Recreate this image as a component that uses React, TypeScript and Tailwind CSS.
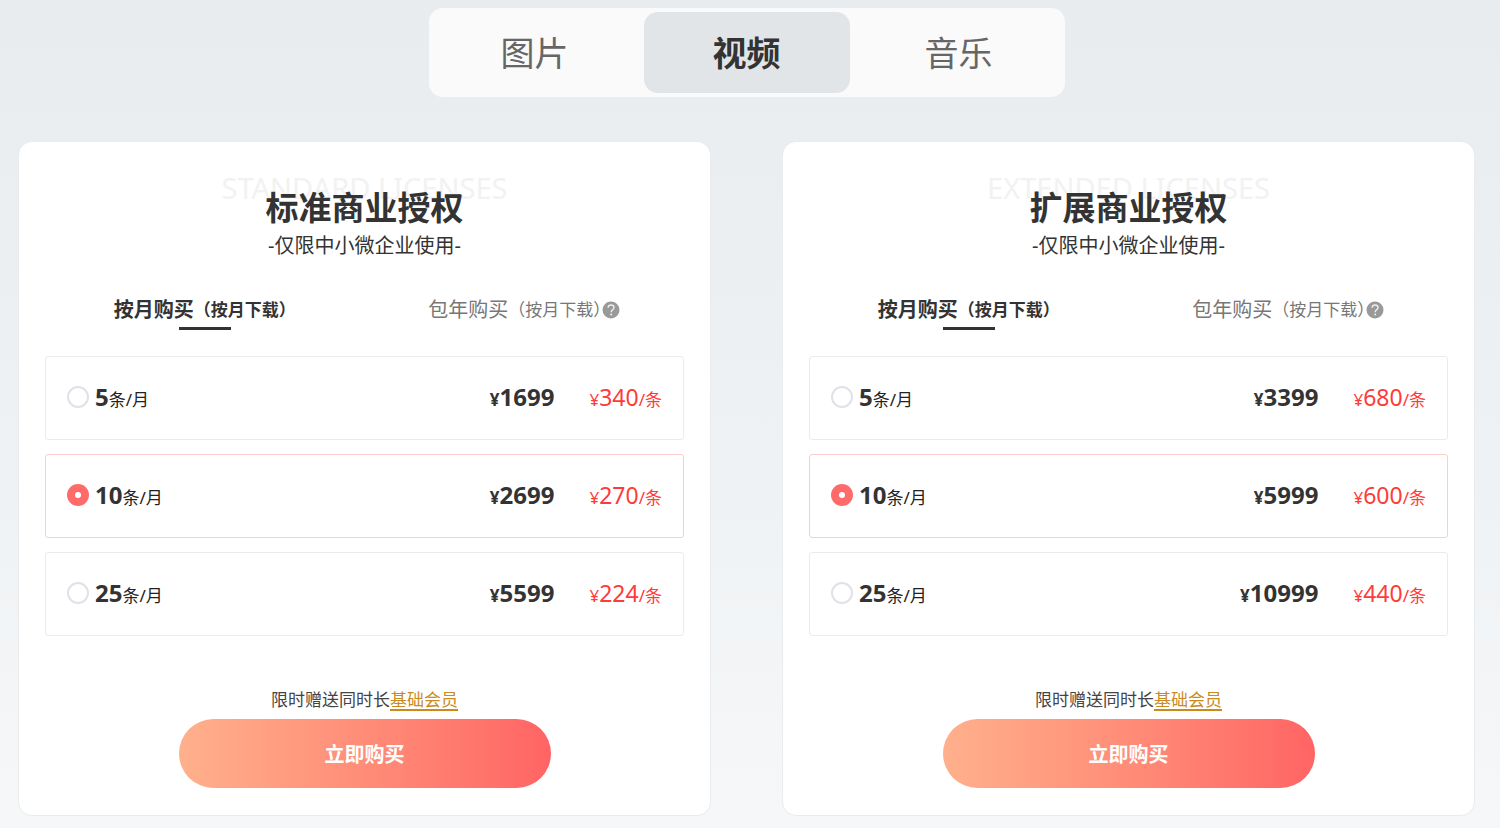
import { useState } from "react";

type Plan = { count: number; price: number; unit: number };

const licenses: { id: string; title: string; watermark: string; plans: Plan[] }[] = [
  {
    id: "standard",
    title: "标准商业授权",
    watermark: "STANDARD LICENSES",
    plans: [
      { count: 5, price: 1699, unit: 340 },
      { count: 10, price: 2699, unit: 270 },
      { count: 25, price: 5599, unit: 224 },
    ],
  },
  {
    id: "extended",
    title: "扩展商业授权",
    watermark: "EXTENDED LICENSES",
    plans: [
      { count: 5, price: 3399, unit: 680 },
      { count: 10, price: 5999, unit: 600 },
      { count: 25, price: 10999, unit: 440 },
    ],
  },
];

const mediaTabs = ["图片", "视频", "音乐"];

const HelpIcon = () => (
  <svg viewBox="0 0 18 18" className="w-[18px] h-[18px] shrink-0 -ml-2" aria-hidden="true">
    <circle cx="9" cy="9" r="8.5" fill="#999" />
    <path
      d="M6.1 6.7C6.2 4.9 7.4 4 9.1 4c1.7 0 2.9.9 2.9 2.4 0 1.1-.6 1.8-1.5 2.5-.9.6-1.3 1.1-1.3 2.3"
      fill="none"
      stroke="#eee"
      strokeWidth="1.4"
    />
    <circle cx="9.2" cy="13.6" r="1" fill="#eee" />
  </svg>
);

const LicenseCard = ({ id, title, watermark, plans }: (typeof licenses)[number]) => {
  const [billing, setBilling] = useState("month");
  const [selected, setSelected] = useState(10);
  const billings = [
    { key: "month", label: "按月购买" },
    { key: "year", label: "包年购买" },
  ];

  return (
    <section className="flex flex-col rounded-[14px] border border-[#e9ebec] bg-white px-[26px] pt-[46px] pb-[27px]">
      <div className="relative text-center">
        <div className="absolute inset-x-0 -top-5 text-[29px] leading-10 text-[#f2f2f2] whitespace-nowrap" aria-hidden="true">
          {watermark}
        </div>
        <h2 className="relative text-[33px] leading-10 font-bold text-[#333]">{title}</h2>
        <p className="relative mt-0.5 text-[20px] leading-8 text-[#333]">-仅限中小微企业使用-</p>
      </div>

      <div className="mt-8 grid grid-cols-2">
        {billings.map(({ key, label }) => (
          <button
            key={key}
            onClick={() => setBilling(key)}
            className={`flex flex-col items-center gap-px leading-8 ${
              billing === key ? "font-bold text-[#333]" : "text-[#777]"
            }`}
          >
            <span className="flex items-center whitespace-nowrap">
              <span className="text-[20px]">{label}</span>
              <span className="text-[17px]">（按月下载）</span>
              {key === "year" && <HelpIcon />}
            </span>
            <span className={`h-[3px] w-[52px] ${billing === key ? "bg-[#333]" : ""}`} />
          </button>
        ))}
      </div>

      <div className="mt-[26px] flex flex-col gap-[14px]">
        {plans.map((plan) => (
          <label
            key={plan.count}
            className={`flex h-[84px] items-center rounded-[3px] border px-[21px] pb-0.5 whitespace-nowrap cursor-pointer ${
              selected === plan.count ? "border-[#ffcccc]" : "border-[#e9ebf0]"
            }`}
          >
            <input
              type="radio"
              name={`plan-${id}`}
              checked={selected === plan.count}
              onChange={() => setSelected(plan.count)}
              className="w-[22px] h-[22px] shrink-0 appearance-none rounded-full border-2 border-[#dfe2e8] bg-white checked:border-8 checked:border-[#ff6a6a]"
            />
            <span className="ml-1.5 text-[17px] text-[#222]">
              <b className="text-[24px] text-[#333]">{plan.count}</b>条/月
            </span>
            <span className="ml-auto text-[17px] font-bold text-[#333]">
              ¥<span className="text-[24px]">{plan.price}</span>
            </span>
            <span className="ml-[35px] text-[17px] text-[#ff3a3a]">
              ¥<span className="text-[23px]">{plan.unit}</span>/条
            </span>
          </label>
        ))}
      </div>

      <p className="mt-[51px] text-center text-[17px] leading-[26px] text-[#444]">
        限时赠送同时长
        <a href="#member" className="text-[#c98a1e] underline decoration-2 underline-offset-3">
          基础会员
        </a>
      </p>
      <button className="mx-auto mt-1.5 h-[69px] w-full max-w-[372px] rounded-full bg-linear-to-r from-[#ffb08c] to-[#ff6464] pt-0.5 text-[20px] font-bold text-white">
        立即购买
      </button>
    </section>
  );
};

export default function App() {
  const [media, setMedia] = useState("视频");

  return (
    <main className="min-h-screen bg-linear-to-b from-[#e8ecef] via-[#edf1f4] to-[#f6f7f8] pt-2 pr-[25px] pb-3 pl-[18px] font-['Noto_Sans','Noto_Sans_CJK_SC',sans-serif]">
      <nav className="mx-auto grid w-full max-w-[636px] grid-cols-3 rounded-[14px] bg-[#fafafa] py-1">
        {mediaTabs.map((tab) => (
          <button
            key={tab}
            onClick={() => setMedia(tab)}
            className={`mx-[3px] h-[81px] rounded-[14px] pt-0.5 text-[34px] ${
              media === tab ? "bg-[#e1e5e8] font-bold text-[#333]" : "text-[#666]"
            }`}
          >
            {tab}
          </button>
        ))}
      </nav>

      <div className="mt-11 grid grid-cols-1 gap-[71px] md:grid-cols-2">
        {licenses.map((license) => (
          <LicenseCard key={license.id} {...license} />
        ))}
      </div>
    </main>
  );
}
